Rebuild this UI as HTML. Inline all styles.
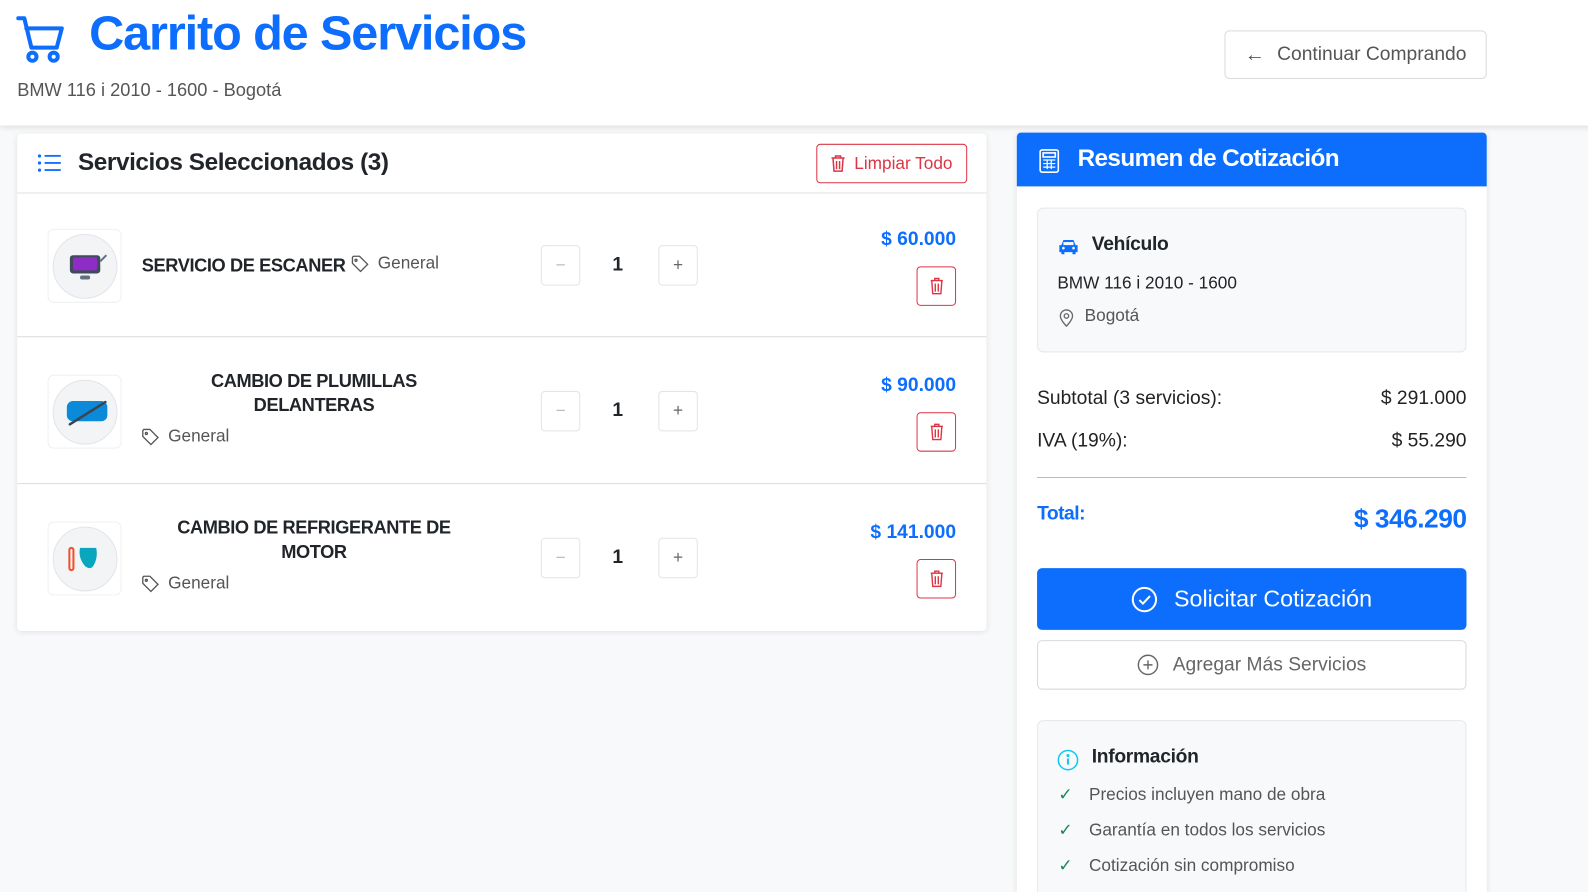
<!DOCTYPE html>
<html><head><meta charset="utf-8"><style>
*{box-sizing:border-box;margin:0;padding:0}
html,body{width:1588px;height:892px;overflow:hidden}
body{background:#f8f9fa;font-family:"Liberation Sans",sans-serif;position:relative;color:#212529}
#w{position:absolute;left:0;top:0;width:1568px;height:881px;transform:scale(1.01276);transform-origin:0 0}
.a{position:absolute}
.hdr{left:0;top:0;width:1600px;height:124px;background:#fff;box-shadow:0 2px 6px rgba(0,0,0,.12)}
.title{left:88px;top:6px;font-size:48px;font-weight:bold;color:#0d6efd;letter-spacing:-1.1px}
.sub{left:17px;top:79px;font-size:18px;color:#555}
.btn-cont{left:1209px;top:30px;width:259px;height:48px;border:1px solid #d9d9d9;border-radius:5px;background:#fff;font-size:19px;color:#555;display:flex;align-items:center;justify-content:center;gap:12px}
.card{left:17px;top:132px;width:957px;height:491px;background:#fff;border-radius:4px;box-shadow:0 1px 6px rgba(0,0,0,.1)}
.ch{left:0;top:0;width:957px;height:59px;border-bottom:1px solid #e0e0e0}
.ct{left:60px;top:15px;font-size:24px;font-weight:bold;letter-spacing:-.4px}
.btn-l{left:789px;top:10px;width:149px;height:39px;border:1px solid #dc3545;border-radius:4px;color:#dc3545;font-size:17px;display:flex;align-items:center;justify-content:center;gap:8px}
.item{left:0;width:957px;height:145px;border-bottom:1px solid #dcdcdc}
.thumb{left:30px;width:73px;height:73px;border:1px solid #f0f0f0;border-radius:6px;background:#fff}
.thumb .c{position:absolute;left:4px;top:4px;width:64px;height:64px;border-radius:50%;background:#f3f4f6;border:1px solid #e2e4e8}
.nm{font-size:18px;font-weight:bold;letter-spacing:-.4px;text-align:center;line-height:24px}
.gen{font-size:17px;color:#555;display:flex;align-items:center;gap:9px}
.qb{width:39px;height:40px;border:1px solid #e4e4e4;border-radius:4px;display:flex;align-items:center;justify-content:center;font-size:17px;color:#666}
.q{font-size:19px;font-weight:bold;width:30px;text-align:center}
.pr{font-size:19px;font-weight:bold;color:#0d6efd;text-align:right;right:30px}
.del{right:30px;width:39px;height:39px;border:1px solid #dc3545;border-radius:4px;display:flex;align-items:center;justify-content:center}
.rc{left:1004px;top:131px;width:464px;height:750px;background:#fff;box-shadow:0 1px 6px rgba(0,0,0,.1);border-radius:4px 4px 0 0}
.rh{left:0;top:0;width:464px;height:53px;background:#0d6efd;border-radius:4px 4px 0 0;color:#fff;font-size:24px;font-weight:bold;letter-spacing:-.6px}
.box{background:#f8f9fa;border:1px solid #e6e8eb;border-radius:6px}
.row{left:20px;width:424px;display:flex;justify-content:space-between;font-size:19px;color:#222}
.li{font-size:17px;color:#555;display:flex;align-items:center;gap:16px;left:20px}
</style></head><body><div id="w">
<div class="a hdr"></div>
<svg class="a" style="left:16px;top:15px" width="48" height="48" viewBox="0 0 48 48" fill="none" stroke="#0d6efd" stroke-width="4" stroke-linecap="round" stroke-linejoin="round"><path d="M2 3h6l7 29h25l5-19H10"/><circle cx="16" cy="41" r="4"/><circle cx="37" cy="41" r="4"/></svg>
<div class="a title">Carrito de Servicios</div>
<div class="a sub">BMW 116 i 2010 - 1600 - Bogotá</div>
<div class="a btn-cont"><span style="font-size:20px">←</span>Continuar Comprando</div>

<div class="a card">
 <div class="a ch">
  <svg class="a" style="left:20px;top:20px" width="24" height="18" viewBox="0 0 24 18" fill="#0d6efd"><circle cx="2" cy="2" r="1.6"/><circle cx="2" cy="9" r="1.6"/><circle cx="2" cy="16" r="1.6"/><rect x="7" y="1" width="16" height="1.8"/><rect x="7" y="8" width="16" height="1.8"/><rect x="7" y="15" width="16" height="1.8"/></svg>
  <div class="a ct">Servicios Seleccionados (3)</div>
  <div class="a btn-l"><svg width="15" height="17" viewBox="0 0 15 17" fill="none" stroke="#dc3545" stroke-width="1.5"><path d="M1 3h13M5 3V1h5v2M2.5 3l1 13h8l1-13M6 6v8M9 6v8"/></svg>Limpiar Todo</div>
 </div>
 <div class="a item" style="top:59px;height:142px">
  <div class="a thumb" style="top:35px"><div class="c"><svg class="a" style="left:14px;top:18px" width="40" height="30" viewBox="0 0 40 30"><rect x="2" y="2" width="30" height="18" rx="3" fill="#3f4a5a"/><rect x="5" y="4" width="24" height="13" rx="2" fill="#8e2dc5"/><rect x="12" y="22" width="10" height="4" rx="2" fill="#607080"/><path d="M32 8l6-6" stroke="#607080" stroke-width="2"/></svg></div></div>
  <div class="a nm" style="left:123px;top:59px">SERVICIO DE ESCANER</div>
  <div class="a gen" style="left:330px;top:59px"><svg width="17" height="17" viewBox="0 0 17 17" fill="none" stroke="#555" stroke-width="1.3"><path d="M1 2v6l8 8 7-7-8-8H2z"/><circle cx="4.5" cy="5" r="1"/></svg>General</div>
  <div class="a qb" style="left:517px;top:51px;color:#bbb">−</div>
  <div class="a q" style="left:578px;top:60px">1</div>
  <div class="a qb" style="left:633px;top:51px">+</div>
  <div class="a pr" style="top:35px">$ 60.000</div>
  <div class="a del" style="top:72px"><svg width="14" height="17" viewBox="0 0 14 17" fill="none" stroke="#dc3545" stroke-width="1.4"><path d="M1 3h12M5 3V1h4v2M2 3l1 13h8l1-13M5.5 6v8M8.5 6v8"/></svg></div>
 </div>
 <div class="a item" style="top:201px">
  <div class="a thumb" style="top:37px"><div class="c"><svg class="a" style="left:11px;top:17px" width="44" height="30" viewBox="0 0 44 30"><rect x="2" y="3" width="40" height="20" rx="6" fill="#0a8ad8"/><path d="M5 26L40 4" stroke="#3b4450" stroke-width="2.5" stroke-linecap="round"/></svg></div></div>
  <div class="a nm" style="left:123px;top:31px;width:340px">CAMBIO DE PLUMILLAS<br>DELANTERAS</div>
  <div class="a gen" style="left:123px;top:88px"><svg width="17" height="17" viewBox="0 0 17 17" fill="none" stroke="#555" stroke-width="1.3"><path d="M1 2v6l8 8 7-7-8-8H2z"/><circle cx="4.5" cy="5" r="1"/></svg>General</div>
  <div class="a qb" style="left:517px;top:53px;color:#bbb">−</div>
  <div class="a q" style="left:578px;top:62px">1</div>
  <div class="a qb" style="left:633px;top:53px">+</div>
  <div class="a pr" style="top:37px">$ 90.000</div>
  <div class="a del" style="top:74px"><svg width="14" height="17" viewBox="0 0 14 17" fill="none" stroke="#dc3545" stroke-width="1.4"><path d="M1 3h12M5 3V1h4v2M2 3l1 13h8l1-13M5.5 6v8M8.5 6v8"/></svg></div>
 </div>
 <div class="a item" style="top:346px;border-bottom:none">
  <div class="a thumb" style="top:37px"><div class="c"><svg class="a" style="left:14px;top:16px" width="36" height="30" viewBox="0 0 36 30"><rect x="1.5" y="4" width="4" height="22" rx="2" fill="none" stroke="#f0502a" stroke-width="2"/><path d="M12 4h16q2 10-3 18q-3 4-8 0q-7-8-5-18z" fill="#0aa6bf"/></svg></div></div>
  <div class="a nm" style="left:123px;top:31px;width:340px">CAMBIO DE REFRIGERANTE DE<br>MOTOR</div>
  <div class="a gen" style="left:123px;top:88px"><svg width="17" height="17" viewBox="0 0 17 17" fill="none" stroke="#555" stroke-width="1.3"><path d="M1 2v6l8 8 7-7-8-8H2z"/><circle cx="4.5" cy="5" r="1"/></svg>General</div>
  <div class="a qb" style="left:517px;top:53px;color:#bbb">−</div>
  <div class="a q" style="left:578px;top:62px">1</div>
  <div class="a qb" style="left:633px;top:53px">+</div>
  <div class="a pr" style="top:37px">$ 141.000</div>
  <div class="a del" style="top:74px"><svg width="14" height="17" viewBox="0 0 14 17" fill="none" stroke="#dc3545" stroke-width="1.4"><path d="M1 3h12M5 3V1h4v2M2 3l1 13h8l1-13M5.5 6v8M8.5 6v8"/></svg></div>
 </div>
</div>

<div class="a rc">
 <div class="a rh">
  <svg class="a" style="left:22px;top:16px" width="20" height="24" viewBox="0 0 20 24" fill="none" stroke="#fff" stroke-width="1.6"><rect x="1" y="1" width="18" height="22" rx="2"/><rect x="4" y="4" width="12" height="4"/><path d="M4 11h12M4 14.5h12M4 18h12M8 11v9M12 11v9" stroke-width="1.2"/></svg>
  <div class="a" style="left:60px;top:12px">Resumen de Cotización</div>
 </div>
 <div class="a box" style="left:20px;top:74px;width:424px;height:143px">
  <svg class="a" style="left:19px;top:30px" width="22" height="16" viewBox="0 0 22 16" fill="#0d6efd"><path d="M4 6l2-5h10l2 5h2v7h-2v2h-3v-2H7v2H4v-2H2V6z"/><rect x="6" y="3" width="10" height="3" fill="#f8f9fa"/><circle cx="6" cy="9" r="1.3" fill="#f8f9fa"/><circle cx="16" cy="9" r="1.3" fill="#f8f9fa"/></svg>
  <div class="a" style="left:53px;top:25px;font-size:19px;font-weight:bold;letter-spacing:-.3px">Vehículo</div>
  <div class="a" style="left:19px;top:64px;font-size:17px">BMW 116 i 2010 - 1600</div>
  <svg class="a" style="left:21px;top:99px" width="14" height="18" viewBox="0 0 14 18" fill="none" stroke="#666" stroke-width="1.3"><path d="M7 17s6-6 6-10A6 6 0 0 0 1 7c0 4 6 10 6 10z"/><circle cx="7" cy="7" r="2.2"/></svg>
  <div class="a" style="left:46px;top:96px;font-size:17px;color:#555">Bogotá</div>
 </div>
 <div class="a row" style="top:252px"><span>Subtotal (3 servicios):</span><span>$ 291.000</span></div>
 <div class="a row" style="top:294px"><span>IVA (19%):</span><span>$ 55.290</span></div>
 <div class="a" style="left:20px;top:340px;width:424px;height:1px;background:#bbb"></div>
 <div class="a" style="left:20px;top:366px;font-size:19px;font-weight:bold;color:#0d6efd;letter-spacing:-.5px">Total:</div>
 <div class="a" style="right:20px;top:366px;font-size:26px;font-weight:bold;color:#0d6efd;letter-spacing:-.5px">$ 346.290</div>
 <div class="a" style="left:20px;top:430px;width:424px;height:61px;background:#0d6efd;border-radius:5px;color:#fff;font-size:23px;display:flex;align-items:center;justify-content:center;gap:16px"><svg width="26" height="26" viewBox="0 0 26 26" fill="none" stroke="#fff" stroke-width="2"><circle cx="13" cy="13" r="11.5"/><path d="M8 13.5l3.5 3.5 7-7.5"/></svg>Solicitar Cotización</div>
 <div class="a" style="left:20px;top:501px;width:424px;height:49px;border:1px solid #d9d9d9;border-radius:5px;color:#666;font-size:19px;display:flex;align-items:center;justify-content:center;gap:14px"><svg width="21" height="21" viewBox="0 0 21 21" fill="none" stroke="#666" stroke-width="1.4"><circle cx="10.5" cy="10.5" r="9.5"/><path d="M10.5 6v9M6 10.5h9"/></svg>Agregar Más Servicios</div>
 <div class="a box" style="left:20px;top:580px;width:424px;height:190px">
  <svg class="a" style="left:19px;top:28px" width="21" height="21" viewBox="0 0 21 21" fill="none" stroke="#0dcaf0" stroke-width="1.5"><circle cx="10.5" cy="10.5" r="9.5"/><path d="M10.5 9v6" stroke-width="2"/><circle cx="10.5" cy="6" r="0.8" fill="#0dcaf0"/></svg>
  <div class="a" style="left:53px;top:25px;font-size:19px;font-weight:bold;letter-spacing:-.3px">Información</div>
  <div class="a li" style="top:63px"><span style="color:#198754">✓</span>Precios incluyen mano de obra</div>
  <div class="a li" style="top:98px"><span style="color:#198754">✓</span>Garantía en todos los servicios</div>
  <div class="a li" style="top:133px"><span style="color:#198754">✓</span>Cotización sin compromiso</div>
 </div>
</div>
</div></body></html>
